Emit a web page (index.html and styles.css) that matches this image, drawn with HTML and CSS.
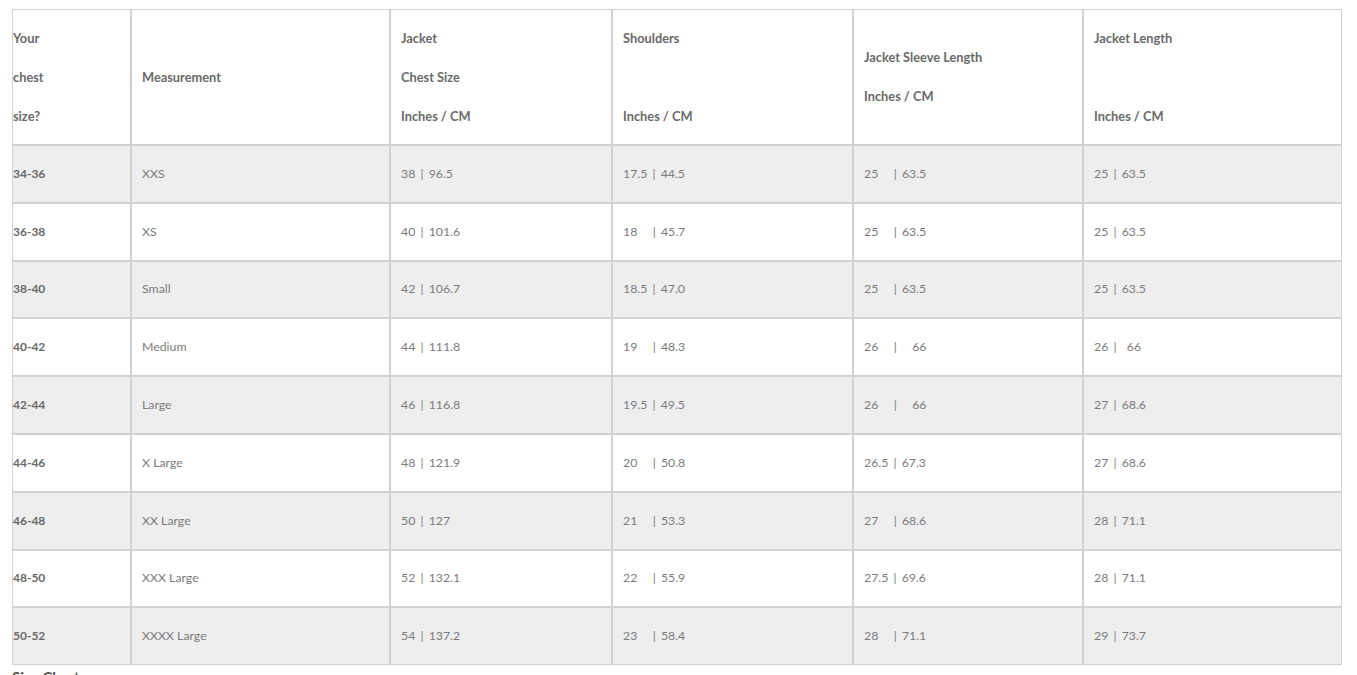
FILE: index.html
```html
<!DOCTYPE html>
<html>
<head>
<meta charset="utf-8">
<link rel="stylesheet" href="styles.css">
</head>
<body>
<table class="chart">
  <colgroup>
    <col class="c1"><col class="c2"><col class="c3"><col class="c4"><col class="c5"><col class="c6">
  </colgroup>
  <thead>
    <tr class="head">
      <th class="first">Your<br>chest<br>size?</th>
      <th>Measurement</th>
      <th>Jacket<br>Chest Size<br>Inches / CM</th>
      <th>Shoulders<br>&nbsp;<br>Inches / CM</th>
      <th>Jacket Sleeve Length<br>Inches / CM</th>
      <th>Jacket Length<br>&nbsp;<br>Inches / CM</th>
    </tr>
  </thead>
  <tbody>
    <tr class="shade"><td class="first">34-36</td><td>XXS</td><td>38 | 96.5</td><td>17.5 | 44.5</td><td>25 &nbsp;&nbsp;| 63.5</td><td>25 | 63.5</td></tr>
    <tr><td class="first">36-38</td><td>XS</td><td>40 | 101.6</td><td>18 &nbsp;&nbsp;| 45.7</td><td>25 &nbsp;&nbsp;| 63.5</td><td>25 | 63.5</td></tr>
    <tr class="shade"><td class="first">38-40</td><td>Small</td><td>42 | 106.7</td><td>18.5 | 47.0</td><td>25 &nbsp;&nbsp;| 63.5</td><td>25 | 63.5</td></tr>
    <tr><td class="first">40-42</td><td>Medium</td><td>44 | 111.8</td><td>19 &nbsp;&nbsp;| 48.3</td><td>26 &nbsp;&nbsp;| &nbsp;&nbsp;66</td><td>26 | &nbsp;66</td></tr>
    <tr class="shade"><td class="first">42-44</td><td>Large</td><td>46 | 116.8</td><td>19.5 | 49.5</td><td>26 &nbsp;&nbsp;| &nbsp;&nbsp;66</td><td>27 | 68.6</td></tr>
    <tr><td class="first">44-46</td><td>X Large</td><td>48 | 121.9</td><td>20 &nbsp;&nbsp;| 50.8</td><td>26.5 | 67.3</td><td>27 | 68.6</td></tr>
    <tr class="shade"><td class="first">46-48</td><td>XX Large</td><td>50 | 127</td><td>21 &nbsp;&nbsp;| 53.3</td><td>27 &nbsp;&nbsp;| 68.6</td><td>28 | 71.1</td></tr>
    <tr><td class="first">48-50</td><td>XXX Large</td><td>52 | 132.1</td><td>22 &nbsp;&nbsp;| 55.9</td><td>27.5 | 69.6</td><td>28 | 71.1</td></tr>
    <tr class="shade"><td class="first">50-52</td><td>XXXX Large</td><td>54 | 137.2</td><td>23 &nbsp;&nbsp;| 58.4</td><td>28 &nbsp;&nbsp;| 71.1</td><td>29 | 73.7</td></tr>
  </tbody>
</table>
<div class="caption">Size Chart</div>
</body>
</html>
```

FILE: styles.css
```css
html, body {
  margin: 0;
  padding: 0;
  background: #ffffff;
}
body {
  padding: 9px 0 0 12px;
  font-family: Lato, "Open Sans", Arial, sans-serif;
  color: #6b6b6b;
}
.chart {
  width: 1330px;
  table-layout: fixed;
  border-collapse: separate;
  border-spacing: 0;
}
.c1 { width: 119px; }
.c2 { width: 259px; }
.c3 { width: 222px; }
.c4 { width: 241px; }
.c5 { width: 230px; }
.c6 { width: 259px; }
.chart th,
.chart td {
  border: 1px solid #d2d2d2;
  padding: 0 0 0 10px;
  text-align: left;
  vertical-align: middle;
}
.chart th.first,
.chart td.first {
  padding-left: 0;
}
.head {
  height: 136px;
}
.chart th {
  font-size: 12.8px;
  font-weight: 700;
  line-height: 39px;
  color: #6a6a6a;
}
.chart tbody tr {
  height: 57.8px;
}
.chart td {
  font-size: 12.3px;
  font-weight: 400;
  color: #7c7c7c;
  line-height: 16px;
}
.chart td:nth-child(n+3) {
  word-spacing: 2px;
}
.chart td.first {
  font-size: 12px;
  font-weight: 700;
  color: #6a6a6a;
}
.shade td {
  background: #eeeeee;
}
.caption {
  font-size: 15px;
  font-weight: 700;
  color: #555555;
  line-height: 20px;
  padding-top: 2px;
}
```
